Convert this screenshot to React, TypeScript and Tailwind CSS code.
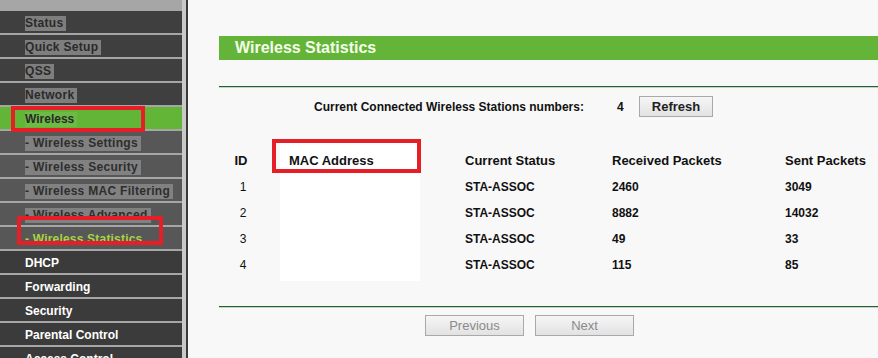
import React from "react";

type Item = { label: string; kind: "top" | "active" | "sub" | "current" | "main" };

const items: Item[] = [
  { label: "Status", kind: "top" },
  { label: "Quick Setup", kind: "top" },
  { label: "QSS", kind: "top" },
  { label: "Network", kind: "top" },
  { label: "Wireless", kind: "active" },
  { label: "- Wireless Settings", kind: "sub" },
  { label: "- Wireless Security", kind: "sub" },
  { label: "- Wireless MAC Filtering", kind: "sub" },
  { label: "- Wireless Advanced", kind: "sub" },
  { label: "- Wireless Statistics", kind: "current" },
  { label: "DHCP", kind: "main" },
  { label: "Forwarding", kind: "main" },
  { label: "Security", kind: "main" },
  { label: "Parental Control", kind: "main" },
  { label: "Access Control", kind: "main" },
];

const rows = [
  { id: 1, status: "STA-ASSOC", rx: "2460", tx: "3049" },
  { id: 2, status: "STA-ASSOC", rx: "8882", tx: "14032" },
  { id: 3, status: "STA-ASSOC", rx: "49", tx: "33" },
  { id: 4, status: "STA-ASSOC", rx: "115", tx: "85" },
];

function NavItem({ item }: { item: Item }) {
  if (item.kind === "top") {
    return (
      <div className="h-[22px] shrink-0 bg-[#3f3f3f] flex items-center pl-[25px] pt-[2px]">
        <span className="bg-[#7e7e7e] text-[#2a2a2a] leading-[15px] pr-[3px] tracking-[0.3px]">{item.label}</span>
      </div>
    );
  }
  if (item.kind === "active") {
    return (
      <div className="h-[22px] shrink-0 bg-[#62b536] flex items-center pl-[25px] pt-[2px]">
        <span className="bg-[#6cbb45] text-[#2a2a2a] leading-[15px] pr-[3px]">{item.label}</span>
      </div>
    );
  }
  if (item.kind === "sub") {
    return (
      <div className="h-[22px] shrink-0 bg-[#575757] flex items-center pl-[25px] pt-[2px]">
        <span className="bg-[#818181] text-[#2e2e2e] leading-[15px] pr-[3px] tracking-[0.3px]">{item.label}</span>
      </div>
    );
  }
  if (item.kind === "current") {
    return (
      <div className="h-[22px] shrink-0 bg-[#575757] flex items-center pl-[25px] pt-[2px]">
        <span className="text-[#a6d445] leading-[15px] tracking-[0.2px]">{item.label}</span>
      </div>
    );
  }
  return (
    <div className="h-[22px] shrink-0 bg-[#3b3b3b] flex items-center pl-[25px] pt-[2px]">
      <span className="text-white leading-[15px]">{item.label}</span>
    </div>
  );
}

function GrayButton({ label, disabled, w }: { label: string; disabled?: boolean; w: string }) {
  return (
    <div
      className={`${w} h-[21px] border border-[#a9a9a9] bg-gradient-to-b from-[#f6f6f6] to-[#e2e2e2] flex items-center justify-center text-[13px] ${
        disabled ? "text-[#8a8a8a]" : "text-[#222]"
      }`}
    >
      {label}
    </div>
  );
}

export default function App() {
  return (
    <div
      className="relative w-[878px] h-[358px] overflow-hidden flex bg-[#f8f8f8]"
      style={{ fontFamily: '"Liberation Sans", Arial, sans-serif' }}
    >
      {/* Sidebar */}
      <div className="w-[182px] shrink-0 bg-[#a6a6a6] pt-[11px] flex flex-col gap-[2px] text-[12px] font-bold">
        {items.map((it) => (
          <NavItem key={it.label} item={it} />
        ))}
      </div>
      <div className="w-[4px] shrink-0 bg-[#c9c9c9]" />
      <div className="w-[2px] shrink-0 bg-[#3a3a3a]" />

      {/* Main */}
      <div className="flex-1 pl-[31px] pt-[36px] flex flex-col text-[#111]">
        <div className="h-[24px] bg-[#64b43a] flex items-center pl-[16px] text-[16px] font-bold text-[#f4ffe8]">
          Wireless Statistics
        </div>

        <div className="mt-[26px] h-[2px] border-t border-[#2f5b3c] border-b border-b-[#b9d9b9]" />

        <div className="mt-[8px] h-[21px] flex items-center pl-[95px] text-[12px] font-bold">
          <span className="w-[303px] pt-[1px]">Current Connected Wireless Stations numbers:</span>
          <span className="w-[22px]">4</span>
          <GrayButton label="Refresh" w="w-[74px]" />
        </div>

        <div className="mt-[31px] flex flex-col">
          <div className="h-[26px] flex items-center text-[13px] font-bold">
            <div className="w-[44px] text-center">ID</div>
            <div className="w-[202px] pl-[26px]">MAC Address</div>
            <div className="w-[147px]">Current Status</div>
            <div className="w-[173px]">Received Packets</div>
            <div className="flex-1">Sent Packets</div>
          </div>
          {rows.map((r) => (
            <div key={r.id} className="h-[26px] flex items-center text-[12px]">
              <div className="w-[44px] text-center pl-[4px]">{r.id}</div>
              <div className="w-[202px]" />
              <div className="w-[147px] font-bold">{r.status}</div>
              <div className="w-[173px] font-bold">{r.rx}</div>
              <div className="flex-1 font-bold">{r.tx}</div>
            </div>
          ))}
        </div>

        <div className="mt-[28px] h-[2px] border-t border-[#2f5b3c] border-b border-b-[#b9d9b9]" />

        <div className="mt-[7px] flex gap-[11px] pl-[206px]">
          <GrayButton label="Previous" disabled w="w-[99px]" />
          <GrayButton label="Next" disabled w="w-[99px]" />
        </div>
      </div>

      {/* Redaction box over MAC column */}
      <div className="absolute left-[280px] top-[140px] w-[140px] h-[141px] bg-white" />
      <div className="absolute left-[289px] top-[153px] text-[13px] font-bold text-[#111] leading-[16px]">MAC Address</div>

      {/* Red annotation boxes */}
      <div className="absolute left-[11px] top-[106px] w-[134px] h-[26px] border-[4px] border-[#e61e28]" />
      <div className="absolute left-[17px] top-[216px] w-[146px] h-[29px] border-[4px] border-[#e61e28]" />
      <div className="absolute left-[272px] top-[139px] w-[149px] h-[34px] border-[4px] border-[#e61e28]" />
    </div>
  );
}
